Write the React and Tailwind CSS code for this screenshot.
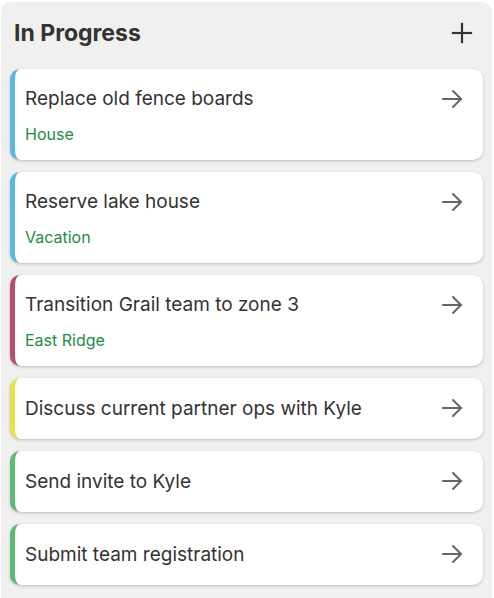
import React from "react";

const tasks = [
  { title: "Replace old fence boards", tag: "House", color: "border-l-[#5bb8dc]" },
  { title: "Reserve lake house", tag: "Vacation", color: "border-l-[#5bb8dc]" },
  { title: "Transition Grail team to zone 3", tag: "East Ridge", color: "border-l-[#b84d6e]" },
  { title: "Discuss current partner ops with Kyle", color: "border-l-[#e6e34a]" },
  { title: "Send invite to Kyle", color: "border-l-[#5db974]" },
  { title: "Submit team registration", color: "border-l-[#5db974]" },
];

function ArrowIcon() {
  return (
    <svg width="24" height="24" viewBox="0 0 24 24" fill="none" stroke="#666" strokeWidth="2" strokeLinecap="round" strokeLinejoin="round">
      <path d="M3 12h18" />
      <path d="M13 4l8 8-8 8" />
    </svg>
  );
}

function TaskCard({ title, tag, color }) {
  return (
    <div className={`flex items-start bg-white rounded-[10px] border-l-[5px] ${color} shadow-[0_1px_3px_rgba(0,0,0,0.22)] pl-[10px] pr-[19px] ${tag ? "pt-[18px] pb-[16px]" : "pt-[18px] pb-[18px]"}`}>
      <div className="flex-1">
        <div className={`text-[19px] text-[#333] ${tag ? "leading-[24px]" : "leading-[25px]"}`}>{title}</div>
        {tag && <div className="mt-[13px] text-[16px] leading-[20px] text-[#1e8c45]">{tag}</div>}
      </div>
      <ArrowIcon />
    </div>
  );
}

export default function App() {
  return (
    <div className="bg-white h-[598px] overflow-hidden pl-[1px] pr-[2px] pt-[2px]" style={{ fontFamily: "Inter, 'Noto Sans', sans-serif" }}>
      <div className="bg-[#f0f0f0] rounded-[10px] h-[640px] px-[9px]">
        <div className="flex items-center justify-between pl-[4px] pr-[10px] pt-[17px] pb-[22px]">
          <h2 className="text-[23px] leading-[28px] font-bold text-[#333]">In Progress</h2>
          <svg width="22" height="22" viewBox="0 0 22 22" fill="none" stroke="#333" strokeWidth="2.2" strokeLinecap="square">
            <path d="M11 2v18" />
            <path d="M2 11h18" />
          </svg>
        </div>
        <div className="flex flex-col gap-[12px]">
          {tasks.map((t, i) => (
            <TaskCard key={i} {...t} />
          ))}
        </div>
      </div>
    </div>
  );
}
